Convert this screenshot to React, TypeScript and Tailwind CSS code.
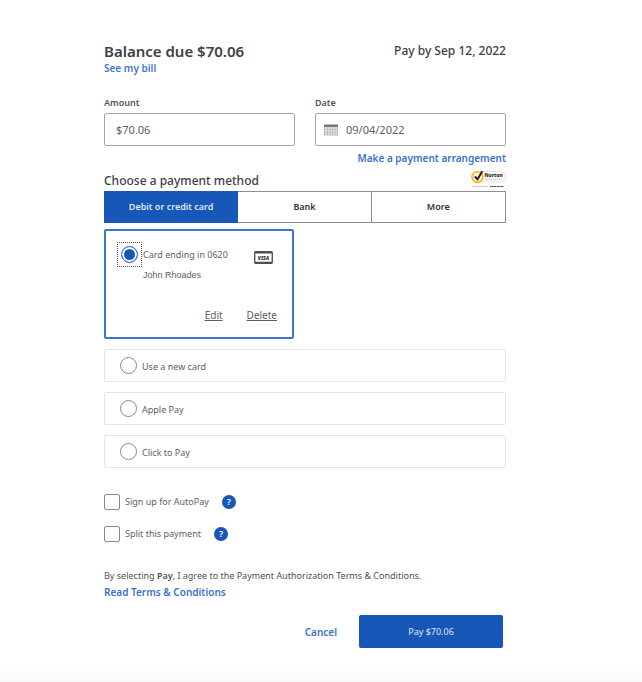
import { useState } from "react";
import clsx from "clsx";

const tabs = ["Debit or credit card", "Bank", "More"];

const otherMethods = [
  { id: "new-card", label: "Use a new card" },
  { id: "apple-pay", label: "Apple Pay" },
  { id: "click-to-pay", label: "Click to Pay" }
];

const extras = [
  { id: "autopay", label: "Sign up for AutoPay" },
  { id: "split", label: "Split this payment" }
];

const radioClass =
  "size-[17px] shrink-0 appearance-none rounded-full border border-[#85888b] bg-white checked:border-[#3c74cc] checked:bg-[#1757b8] checked:shadow-[inset_0_0_0_2px_white]";

function CalendarIcon() {
  return (
    <svg viewBox="0 0 14 12" className="h-3 w-3.5 shrink-0" aria-hidden="true">
      <rect x="0.5" y="0.5" width="13" height="10.5" fill="#e4e4e4" stroke="#b9b9b9" />
      <rect x="0" y="1" width="14" height="2" fill="#777" />
      <path d="M1 5.5h12M1 8.5h12M3.5 3v8M6 3v8M8.5 3v8M11 3v8" stroke="#b4b4b4" strokeWidth="0.7" />
    </svg>
  );
}

function NortonSeal() {
  return (
    <svg viewBox="0 0 35 20" className="h-5 w-[35px]" role="img" aria-label="Norton Secured">
      <rect x="7" y="2.5" width="27.5" height="10.5" rx="4" fill="#fafafa" stroke="#dedede" strokeWidth="0.8" />
      <circle cx="6.5" cy="8" r="5.3" fill="#fff" stroke="#fdbb30" strokeWidth="2" />
      <path d="M3.8 7.3l2.7 3 4.8-8" fill="none" stroke="#222" strokeWidth="2" />
      <text x="13.5" y="8.2" fontSize="5" fontWeight="800" fill="#222" fontFamily="Noto Sans, sans-serif">
        Norton
      </text>
      <path d="M14 10.5h17" stroke="#c8c8c8" strokeWidth="1" strokeDasharray="1.5 0.5" />
      <path d="M1.5 17.5h16" stroke="#d79a95" strokeWidth="0.8" strokeDasharray="2 0.6" />
      <path d="M19 17.5h14" stroke="#555" strokeWidth="1" strokeDasharray="3 0.5" />
    </svg>
  );
}

function VisaIcon() {
  return (
    <svg viewBox="0 0 19 13" className="h-[13px] w-[19px]" role="img" aria-label="Visa">
      <rect x="0.7" y="0.7" width="17.6" height="11.6" rx="1" fill="#fff" stroke="#555" strokeWidth="1.4" />
      <path d="M1 1.5h17M1 11.8h17" stroke="#4f4f4f" strokeWidth="2" />
      <text x="9.5" y="8.8" textAnchor="middle" fontSize="5" fontWeight="900" fontStyle="italic" fill="#333" fontFamily="Noto Sans, sans-serif">
        VISA
      </text>
    </svg>
  );
}

export default function App() {
  const [tab, setTab] = useState(tabs[0]);
  const [method, setMethod] = useState("saved");

  return (
    <main className="min-h-screen bg-white bg-linear-to-t from-[#fafafa] to-white to-[20px] pt-10 pr-[136px] pb-8 pl-[104px] font-['Noto_Sans',sans-serif] text-[9px] leading-4 text-[#5c6064]">
      <header className="flex items-start justify-between text-[#3c4147]">
        <div>
          <h1 className="text-[15px] leading-[22px] font-semibold">Balance due $70.06</h1>
          <a href="#bill" className="block text-[10px] leading-3 font-semibold text-[#3f78cf]">
            See my bill
          </a>
        </div>
        <p className="text-[12px] leading-[22px] font-medium">Pay by Sep 12, 2022</p>
      </header>

      <form onSubmit={(e) => e.preventDefault()}>
        <div className="mt-[21px] grid grid-cols-2 gap-5">
          <div>
            <label htmlFor="amount" className="block font-semibold text-[#505459]">
              Amount
            </label>
            <input
              id="amount"
              defaultValue="$70.06"
              className="mt-0.5 h-[33px] w-full rounded-xs border border-[#a3a5a7] px-[11px] text-[11px]"
            />
          </div>
          <div>
            <label htmlFor="date" className="block font-semibold text-[#505459]">
              Date
            </label>
            <div className="mt-0.5 flex h-[33px] items-center gap-2 rounded-xs border border-[#a3a5a7] px-2">
              <CalendarIcon />
              <input id="date" defaultValue="09/04/2022" className="w-full min-w-0 text-[11px]" />
            </div>
          </div>
        </div>

        <a href="#arrangement" className="mt-1 block text-right text-[10px] font-semibold text-[#3a72ca]">
          Make a payment arrangement
        </a>

        <div className="mt-[3px] flex items-start justify-between">
          <h2 className="pt-0.5 text-[12px] leading-5 font-medium text-[#3c4147]">Choose a payment method</h2>
          <NortonSeal />
        </div>

        <div role="tablist" className="grid h-8 grid-cols-3 divide-x divide-[#8e8e8e] border border-[#8e8e8e]">
          {tabs.map((name) => (
            <button
              key={name}
              type="button"
              role="tab"
              aria-selected={tab === name}
              onClick={() => setTab(name)}
              className={clsx(
                "font-semibold",
                tab === name ? "-m-px bg-[#1757b8] text-[#dce7f8]" : "bg-white text-[#333]"
              )}
            >
              {name}
            </button>
          ))}
        </div>

        <div className="mt-1.5 flex h-[110px] w-[190px] flex-col justify-between rounded-xs border-2 border-[#3d74cd] px-[11px] pt-[11px] pb-3.5">
          <div className="flex items-start">
            <span className="flex size-[25px] items-center justify-center border border-dotted border-[#555]">
              <input
                id="saved"
                type="radio"
                name="method"
                checked={method === "saved"}
                onChange={() => setMethod("saved")}
                className={radioClass}
              />
            </span>
            <label htmlFor="saved" className="ml-px grow pt-[3px] leading-5">
              Card ending in 0620
              <span className="block font-['Liberation_Sans',sans-serif]">John Rhoades</span>
            </label>
            <span className="pt-[9px] pr-2">
              <VisaIcon />
            </span>
          </div>
          <div className="flex justify-end gap-6 pr-1 text-[10px]">
            <button type="button" className="cursor-pointer underline">
              Edit
            </button>
            <button type="button" className="cursor-pointer underline">
              Delete
            </button>
          </div>
        </div>

        <div className="mt-2.5 flex flex-col gap-2.5">
          {otherMethods.map((m) => (
            <label
              key={m.id}
              className="flex h-[33px] items-center gap-[5px] rounded-xs border border-[#e4e5e7] px-[15px]"
            >
              <input
                type="radio"
                name="method"
                checked={method === m.id}
                onChange={() => setMethod(m.id)}
                className={radioClass}
              />
              <span className="pt-0.5">{m.label}</span>
            </label>
          ))}
        </div>

        <div className="mt-[26px] flex flex-col gap-4">
          {extras.map((x) => (
            <div key={x.id} className="flex items-center gap-[13px]">
              <label className="flex items-center gap-[5px]">
                <input
                  type="checkbox"
                  className="size-4 appearance-none rounded-xs border border-[#85888b] bg-white checked:bg-[#1757b8]"
                />
                {x.label}
              </label>
              <button
                type="button"
                aria-label={`About ${x.label}`}
                className="size-3.5 rounded-full bg-[#1757b8] leading-3.5 font-semibold text-white"
              >
                ?
              </button>
            </div>
          ))}
        </div>

        <p className="mt-[26px] text-[#4c5055]">
          By selecting <b className="font-semibold">Pay</b>, I agree to the Payment Authorization Terms &amp; Conditions.
        </p>
        <a href="#terms" className="block text-[10px] font-semibold text-[#3a72ca]">
          Read Terms &amp; Conditions
        </a>

        <div className="mt-[15px] flex items-center justify-end gap-[22px] pr-[3px]">
          <button type="button" className="text-[10px] font-semibold text-[#3a72ca]">
            Cancel
          </button>
          <button type="submit" className="h-[33px] w-36 rounded-xs bg-[#1757b8] text-[#dce7f8]">
            Pay $70.06
          </button>
        </div>
      </form>
    </main>
  );
}
